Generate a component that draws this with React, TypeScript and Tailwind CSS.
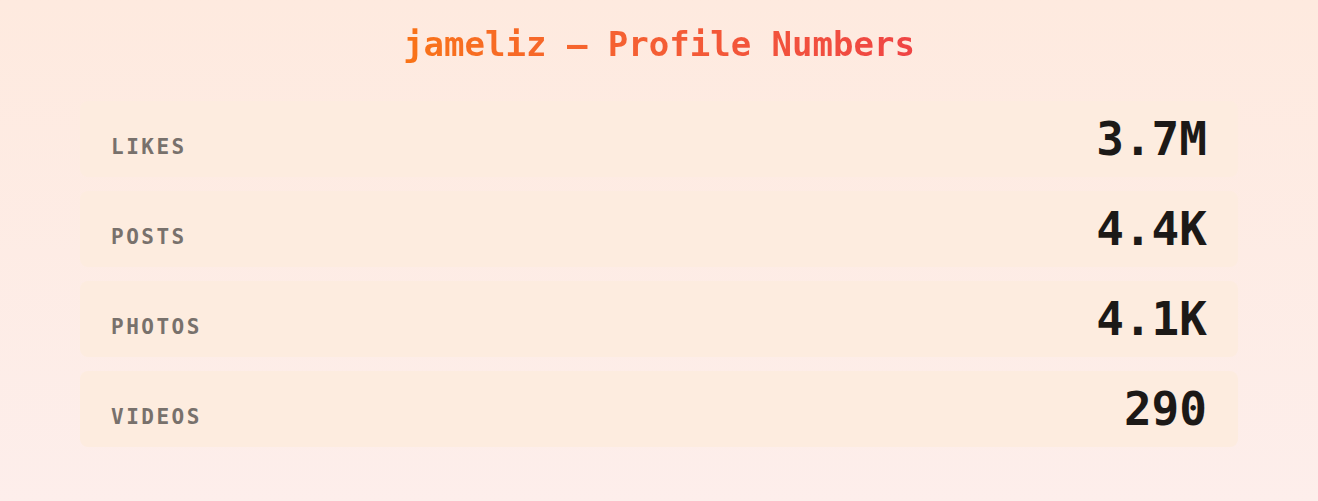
const stats = [
  { label: "LIKES", value: "3.7M" },
  { label: "POSTS", value: "4.4K" },
  { label: "PHOTOS", value: "4.1K" },
  { label: "VIDEOS", value: "290" },
];

const App = () => {
  return (
    <div
      className="min-h-[501px] w-full bg-gradient-to-b from-[#feeadf] to-[#fdeeeb] px-20 pt-6 pb-10"
      style={{ fontFamily: '"DejaVu Sans Mono", "Liberation Mono", monospace' }}
    >
      {/* Title */}
      <h1 className="text-center text-[34px] leading-[40px] font-bold mb-[37px]">
        <span className="bg-gradient-to-r from-[#f97316] to-[#ef4444] bg-clip-text text-transparent">
          jameliz — Profile Numbers
        </span>
      </h1>

      {/* Stat rows */}
      <div className="flex flex-col gap-[14px]">
        {stats.map((s) => (
          <div
            key={s.label}
            className="flex h-[76px] items-center justify-between rounded-lg bg-[#fdecdf] px-[31px]"
          >
            <span className="text-[21px] font-bold tracking-[2.5px] text-[#78716c] pt-[18px]">
              {s.label}
            </span>
            <span className="text-[46px] leading-none font-bold text-[#1c1917]">
              {s.value}
            </span>
          </div>
        ))}
      </div>
    </div>
  );
};

export default App;
